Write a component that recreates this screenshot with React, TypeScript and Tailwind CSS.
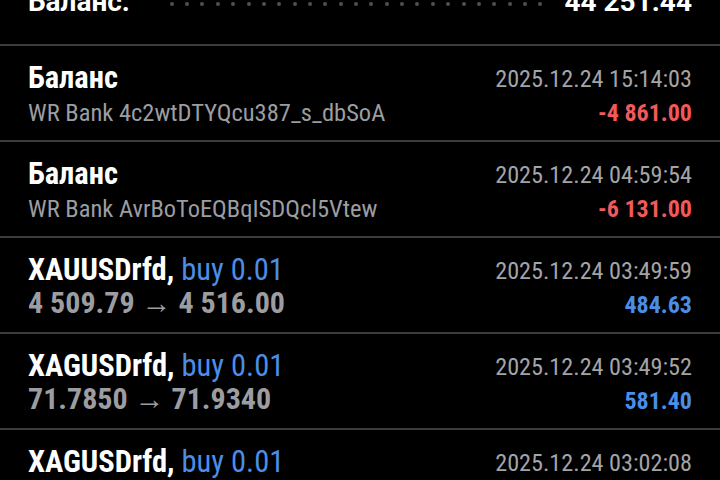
import React from "react";

type Row = {
  kind: "bal" | "trade";
  title: string;
  side?: string;
  sub: string;
  date: string;
  amount: string;
  neg: boolean;
};

const rows: Row[] = [
  { kind: "bal", title: "Баланс", sub: "WR Bank 4c2wtDTYQcu387_s_dbSoA", date: "2025.12.24 15:14:03", amount: "-4 861.00", neg: true },
  { kind: "bal", title: "Баланс", sub: "WR Bank AvrBoToEQBqISDQcl5Vtew", date: "2025.12.24 04:59:54", amount: "-6 131.00", neg: true },
  { kind: "trade", title: "XAUUSDrfd,", side: "buy 0.01", sub: "4 509.79 → 4 516.00", date: "2025.12.24 03:49:59", amount: "484.63", neg: false },
  { kind: "trade", title: "XAGUSDrfd,", side: "buy 0.01", sub: "71.7850 → 71.9340", date: "2025.12.24 03:49:52", amount: "581.40", neg: false },
  { kind: "trade", title: "XAGUSDrfd,", side: "buy 0.01", sub: "", date: "2025.12.24 03:02:08", amount: "", neg: false },
];

const F = { fontFamily: "Roboto, 'Noto Sans', sans-serif" };

export default function App() {
  return (
    <div className="w-[720px] h-[480px] overflow-hidden bg-black" style={F}>
      <div className="h-[46px] border-b-2 border-[#3b3b41] px-[28px] overflow-hidden">
        <div className="flex items-center mt-[-12px] h-[28px] leading-[28px] text-white font-bold text-[28px]">
          <span>Баланс:</span>
          <div className="flex-1 flex justify-between items-center pl-[40px] pr-[22px] pt-[3px]">
            {Array.from({ length: 25 }).map((_, i) => (
              <span key={i} className="w-[4px] h-[4px] rounded-full bg-[#505052]" />
            ))}
          </div>
          <span>44 251.44</span>
        </div>
      </div>
      {rows.map((r, i) => (
        <div key={i} className="h-[96px] border-b-2 border-[#3b3b41] px-[28px] flex justify-between">
          <div className="flex flex-col pt-[15px] font-stretch-condensed">
            <div className="leading-[34px] text-[30.5px] whitespace-nowrap">
              <span className="font-bold text-white">{r.title}</span>
              {r.side && <span className="text-[#4a8ee6]"> {r.side}</span>}
            </div>
            {r.kind === "bal" ? (
              <div className="leading-[28px] text-[24.5px] text-[#9c9da1] mt-[4px] whitespace-nowrap">{r.sub}</div>
            ) : (
              <div className="leading-[34px] text-[30px] font-bold text-[#9c9da1] mt-[-1px] whitespace-nowrap">{r.sub}</div>
            )}
          </div>
          <div className="flex flex-col items-end pt-[18px] font-stretch-condensed">
            <div className="leading-[30px] text-[24.2px] text-[#a4a4a6] whitespace-nowrap">{r.date}</div>
            <div
              className={`leading-[30px] text-[24px] font-bold mt-[4px] whitespace-nowrap ${r.neg ? "text-[#f05a5c]" : "text-[#4a8ee6]"}`}
            >
              {r.amount}
            </div>
          </div>
        </div>
      ))}
    </div>
  );
}
